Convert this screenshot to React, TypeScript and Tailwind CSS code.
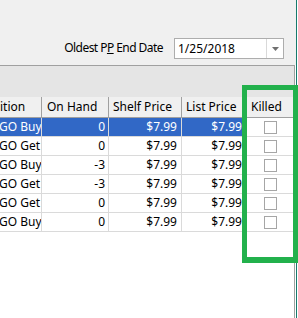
const rows = [
  { name: "GO Buy", onHand: "0", shelf: "$7.99", list: "$7.99", selected: true },
  { name: "GO Get", onHand: "0", shelf: "$7.99", list: "$7.99" },
  { name: "GO Buy", onHand: "-3", shelf: "$7.99", list: "$7.99" },
  { name: "GO Get", onHand: "-3", shelf: "$7.99", list: "$7.99" },
  { name: "GO Get", onHand: "0", shelf: "$7.99", list: "$7.99" },
  { name: "GO Buy", onHand: "0", shelf: "$7.99", list: "$7.99" },
];

const App = () => {
  return (
    <div className="relative flex h-[318px] w-[298px] overflow-hidden whitespace-nowrap bg-white font-['Noto_Sans',sans-serif] text-[12px] leading-none text-black">
      <div className="flex w-[296px] flex-col">
        {/* top filter bar */}
        <div className="flex h-[65px] shrink-0 items-end justify-end bg-[#f0f0f0] pb-[6px] pr-[12px]">
          <span className="mr-[11px] mb-[5px] tracking-[-0.55px]">
            Oldest P<span className="underline">P</span> End Date
          </span>
          <div className="flex h-[21px] w-[110px] items-center border border-[#adadad] bg-white">
            <span className="flex-1 pl-[3px]">1/25/2018</span>
            <div className="flex h-full w-[17px] items-center justify-center border-l border-[#d9d9d9]">
              <svg width="7" height="4" viewBox="0 0 7 4">
                <path d="M0 0h7L3.5 4z" fill="#707070" />
              </svg>
            </div>
          </div>
        </div>

        {/* grid */}
        <div className="flex w-[295px] flex-1 flex-col border-r border-[#a0a0a0]">
          <div className="h-[32px] shrink-0 border-t border-[#a0a0a0] bg-[#e5e5e5]" />
          <div className="flex h-[21px] shrink-0 border-b border-[#a0a0a0] bg-[#f0f0f0]">
            <div className="flex w-[42px] items-center overflow-hidden border-r border-[#a0a0a0]">ition</div>
            <div className="flex w-[67px] items-center border-r border-[#a0a0a0] pl-[5px]">On Hand</div>
            <div className="flex w-[73px] items-center border-r border-[#a0a0a0] pl-[4px]">Shelf Price</div>
            <div className="flex w-[65px] items-center border-r border-[#a0a0a0] pl-[4px]">List Price</div>
            <div className="flex flex-1 items-center pl-[4px]">Killed</div>
          </div>
          {rows.map((r, i) => (
            <div
              key={i}
              className={`flex h-[19px] shrink-0 border-b border-[#dadada] ${r.selected ? "bg-[#3168c6] text-white" : ""}`}
            >
              <div className="flex w-[42px] items-center overflow-hidden border-r border-[#dadada]">
                <span className="-ml-[1px]">{r.name}</span>
              </div>
              <div className="flex w-[67px] items-center justify-end border-r border-[#dadada] pr-[3px]">{r.onHand}</div>
              <div className="flex w-[73px] items-center justify-end border-r border-[#dadada] pr-[4px]">{r.shelf}</div>
              <div className="flex w-[65px] items-center justify-end border-r border-[#dadada] pr-[4px]">{r.list}</div>
              <div className={`flex flex-1 items-center justify-center ${r.selected ? "bg-white" : ""}`}>
                <div className="h-[13px] w-[13px] border border-[#a6a6a6] bg-white" />
              </div>
            </div>
          ))}
          <div className="flex-1 bg-white" />
        </div>
      </div>
      <div className="w-[1px] bg-[#177a6c]" />
      <div className="w-[1px] bg-white" />

      {/* highlight box */}
      <div className="absolute left-[242px] top-[85px] h-[178px] w-[56px] border-[5px] border-b-[6px] border-[#22b14c]" />
    </div>
  );
};

export default App;
